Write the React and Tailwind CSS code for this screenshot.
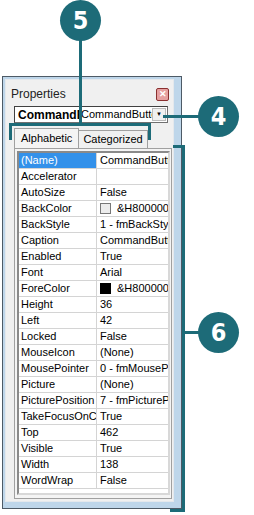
import React from "react";

const rows = [
  ["(Name)", "CommandButt", "sel"],
  ["Accelerator", ""],
  ["AutoSize", "False"],
  ["BackColor", "&H800000", "light"],
  ["BackStyle", "1 - fmBackStyl"],
  ["Caption", "CommandButt"],
  ["Enabled", "True"],
  ["Font", "Arial"],
  ["ForeColor", "&H800000", "dark"],
  ["Height", "36"],
  ["Left", "42"],
  ["Locked", "False"],
  ["MouseIcon", "(None)"],
  ["MousePointer", "0 - fmMousePo"],
  ["Picture", "(None)"],
  ["PicturePosition", "7 - fmPicturePo"],
  ["TakeFocusOnClick", "True"],
  ["Top", "462"],
  ["Visible", "True"],
  ["Width", "138"],
  ["WordWrap", "False"],
];

const Callout = ({ n, className }) => (
  <div
    className={`absolute w-[41px] h-[41px] rounded-full bg-[#1d6b78] text-white flex items-center justify-center text-[25px] font-bold ${className}`}
    style={{ fontFamily: '"Liberation Sans Narrow", "DejaVu Sans Condensed", sans-serif' }}
  >
    {n}
  </div>
);

export default function App() {
  return (
    <div
      className="relative w-[254px] h-[515px] bg-white overflow-hidden"
      style={{ fontFamily: '"Liberation Sans", Arial, sans-serif' }}
    >
      {/* window */}
      <div className="ml-[2px] mt-[76px] w-[180px] h-[433px] border border-[#4d5a66] bg-[#bed6ea] pl-[2px] pt-[2px] pr-[7px] pb-[6px] flex">
        <div className="flex-1 min-w-0 bg-[#f0f0f0] border border-[#e4e8ec] flex flex-col pl-[8px] pr-[1px] pb-[2px]">
          <div className="flex items-center justify-between h-[26px] pt-[2px] pr-[3px]">
            <span className="text-[12px] text-[#222] -ml-[3px]">Properties</span>
            <div className="w-[13px] h-[13px] rounded-[2px] border border-[#8a3030] bg-[#e6a0a0] flex items-center justify-center text-[9px] leading-none text-white font-bold">
              ✕
            </div>
          </div>
          <div className="flex items-center h-[17px] mr-[4px] bg-white border border-[#707070] border-t-[#404040] border-l-[#404040] text-[11px] text-black">
            <span className="font-bold text-[12px] pl-[3px] w-[64px] shrink-0 overflow-hidden whitespace-nowrap">CommandButton1</span>
            <span className="pl-[2px] flex-1 min-w-0 overflow-hidden whitespace-nowrap">CommandButton</span>
            <div className="w-[14px] h-[13px] mr-[1px] shrink-0 bg-[#f0f0f0] border border-[#bbb] flex items-center justify-center text-[6px]">▼</div>
          </div>
          <div className="flex items-end h-[21px] mt-[4px] text-[11px]">
            <div className="h-[20px] px-[6px] flex items-center bg-[#f4f4f4] border border-[#a0a0a0] border-b-0 relative z-10">Alphabetic</div>
            <div className="h-[18px] px-[4px] flex items-center bg-[#f0f0f0] border border-[#a0a0a0] border-b-0 border-l-0">Categorized</div>
          </div>
          <div className="flex-1 border border-[#a0a0a0] bg-[#f4f4f4] pl-[2px] pr-[1px] pt-[2px] pb-[3px] flex">
            <div className="flex-1 min-w-0 border-2 border-[#8a8a8a] border-r-[#d8d8d8] border-b-[#d8d8d8] bg-white flex flex-col">
              {rows.map(([k, v, t]) => (
                <div key={k} className="flex h-[16px] border-b border-[#d4d4d4] text-[11px] leading-[15px] text-black">
                  <div
                    className={`w-[78px] shrink-0 border-r border-[#d4d4d4] pl-[2px] overflow-hidden whitespace-nowrap ${t === "sel" ? "bg-[#3391ea] text-white" : ""}`}
                  >
                    {k}
                  </div>
                  <div className="flex-1 min-w-0 pl-[3px] overflow-hidden whitespace-nowrap flex items-center">
                    {t === "light" && <span className="inline-block shrink-0 w-[11px] h-[11px] border border-[#777] bg-[#ececec] mr-[6px]" />}
                    {t === "dark" && <span className="inline-block shrink-0 w-[11px] h-[11px] bg-black mr-[6px]" />}
                    {v}
                  </div>
                </div>
              ))}
            </div>
          </div>
        </div>
      </div>

      {/* callout 5 */}
      <Callout n="5" className="left-[60px] top-[0px]" />
      <div className="absolute left-[79px] top-[40px] w-[3px] h-[86px] bg-[#1d6b78]" />
      <div className="absolute left-[9px] top-[123px] w-[142px] h-[3px] bg-[#1d6b78]" />
      <div className="absolute left-[9px] top-[123px] w-[3px] h-[17px] bg-[#1d6b78]" />
      <div className="absolute left-[148px] top-[123px] w-[3px] h-[17px] bg-[#1d6b78]" />

      {/* callout 4 */}
      <Callout n="4" className="left-[198px] top-[96px]" />
      <div className="absolute left-[163px] top-[115px] w-[36px] h-[3px] bg-[#1d6b78]" />

      {/* callout 6 */}
      <Callout n="6" className="left-[198px] top-[312px]" />
      <div className="absolute left-[182px] top-[145px] w-[3px] h-[367px] bg-[#1d6b78]" />
      <div className="absolute left-[173px] top-[145px] w-[11px] h-[3px] bg-[#1d6b78]" />
      <div className="absolute left-[170px] top-[509px] w-[14px] h-[3px] bg-[#1d6b78]" />
      <div className="absolute left-[184px] top-[331px] w-[15px] h-[3px] bg-[#1d6b78]" />
    </div>
  );
}
